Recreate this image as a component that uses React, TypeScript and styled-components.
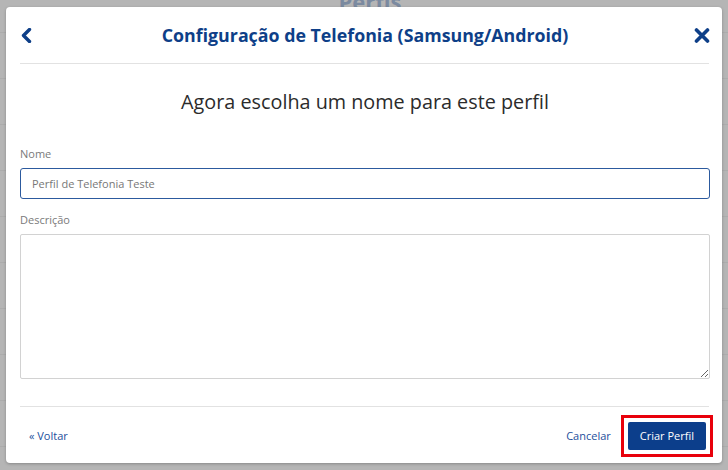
import React from 'react';
import styled, {createGlobalStyle} from 'styled-components';

const GlobalStyle = createGlobalStyle`
  html, body {
    margin: 0;
    padding: 0;
  }
  body {
    font-family: "Open Sans", "Noto Sans", sans-serif;
    background: #b5b5b5;
  }
`

const rows = Array.from({length: 10});

const ChevronLeft = () => (
    <svg width="11" height="15" viewBox="0 0 11 15">
        <path d="M8.5 1.5 L2.5 7.5 L8.5 13.5" fill="none" stroke="#0e3f88" strokeWidth="3.4"
              strokeLinecap="round" strokeLinejoin="round"/>
    </svg>
);

const CloseIcon = () => (
    <svg width="16" height="15" viewBox="0 0 16 15">
        <path d="M2.5 2 L13.5 13 M13.5 2 L2.5 13" fill="none" stroke="#0e3f88" strokeWidth="3.6"
              strokeLinecap="round"/>
    </svg>
);

export default function App() {
    return (
        <>
            <GlobalStyle/>
            <Page>
                <PageTitle>Perfis</PageTitle>
                <PageRows>
                    {rows.map((_, i) => <PageRow key={i}/>)}
                </PageRows>
                <Overlay>
                    <Modal>
                        <Header>
                            <IconButton aria-label="Voltar"><ChevronLeft/></IconButton>
                            <Title>Configuração de Telefonia (Samsung/Android)</Title>
                            <IconButton aria-label="Fechar"><CloseIcon/></IconButton>
                        </Header>
                        <Divider/>
                        <Body>
                            <Subtitle>Agora escolha um nome para este perfil</Subtitle>
                            <Field>
                                <Label>Nome</Label>
                                <Input placeholder="Perfil de Telefonia Teste" $focused/>
                            </Field>
                            <Field>
                                <Label>Descrição</Label>
                                <TextArea/>
                            </Field>
                        </Body>
                        <Divider/>
                        <Footer>
                            <LinkButton>« Voltar</LinkButton>
                            <FooterActions>
                                <LinkButton>Cancelar</LinkButton>
                                <Highlight>
                                    <PrimaryButton>Criar Perfil</PrimaryButton>
                                </Highlight>
                            </FooterActions>
                        </Footer>
                    </Modal>
                </Overlay>
            </Page>
        </>
    );
}

const Page = styled.div`
  position: relative;
  width: 728px;
  height: 470px;
  overflow: hidden;
  background: #b5b5b5;
`
const PageTitle = styled.div`
  text-align: center;
  font-size: 22px;
  font-weight: 700;
  color: #7b8aa0;
  line-height: 20px;
  margin-top: -9px;
  padding-left: 12px;
`
const PageRows = styled.div`
  display: flex;
  flex-direction: column;
  margin-top: 21px;
`
const PageRow = styled.div`
  height: 45px;
  border-top: 1px solid #acacac;
`
const Overlay = styled.div`
  position: absolute;
  inset: 0;
  display: flex;
  padding: 7px 6px 7px 6px;
`
const Modal = styled.div`
  flex: 1;
  display: flex;
  flex-direction: column;
  background: #fff;
  border-radius: 4px;
  box-shadow: 0 1px 3px rgba(0, 0, 0, 0.25);
`
const Header = styled.div`
  height: 56px;
  display: flex;
  align-items: center;
  justify-content: space-between;
  padding: 0 12px 0 15px;
`
const IconButton = styled.button`
  display: flex;
  align-items: center;
  justify-content: center;
  border: none;
  background: none;
  padding: 0;
  cursor: pointer;
`
const Title = styled.h1`
  margin: 0 0 0 4px;
  font-size: 17.8px;
  font-weight: 700;
  color: #0e3f88;
`
const Divider = styled.hr`
  margin: 0 13px 0 14px;
  border: none;
  border-top: 1px solid #e2e2e2;
`
const Body = styled.div`
  display: flex;
  flex-direction: column;
  padding: 24px 12px 27px 14px;
`
const Subtitle = styled.h2`
  margin: 0 0 31px;
  text-align: center;
  font-size: 19.8px;
  font-weight: 400;
  line-height: 27px;
  color: #2b2b2b;
`
const Field = styled.div`
  display: flex;
  flex-direction: column;
  gap: 7px;
  & + & {
    margin-top: 13px;
  }
`
const Label = styled.label`
  font-size: 11px;
  line-height: 15px;
  color: #7a7a7a;
`
const Input = styled.input<{ $focused?: boolean }>`
  box-sizing: border-box;
  height: 31px;
  padding: 0 11px;
  font-family: inherit;
  font-size: 11px;
  color: #555;
  border: 1px solid ${p => p.$focused ? '#2c5a9e' : '#cfcfcf'};
  border-radius: 3px;
  outline: none;
  &::placeholder {
    color: #777;
  }
`
const TextArea = styled.textarea`
  box-sizing: border-box;
  height: 145px;
  padding: 8px 11px;
  font-family: inherit;
  font-size: 11px;
  border: 1px solid #d2d2d2;
  border-radius: 2px;
  resize: vertical;
  outline: none;
`
const Footer = styled.div`
  flex: 1;
  display: flex;
  align-items: center;
  justify-content: space-between;
  padding: 1px 9px 0 23px;
`
const FooterActions = styled.div`
  display: flex;
  align-items: center;
  gap: 10px;
`
const LinkButton = styled.button`
  border: none;
  background: none;
  padding: 0;
  font-family: inherit;
  font-size: 11px;
  color: #1d4f9c;
  cursor: pointer;
`
const Highlight = styled.div`
  display: flex;
  padding: 4px;
  border: 3px solid #e8000b;
`
const PrimaryButton = styled.button`
  height: 28px;
  padding: 0 12px;
  border: none;
  border-radius: 2px;
  background: #0c3e8b;
  color: #fff;
  font-family: inherit;
  font-size: 11px;
  cursor: pointer;
`
